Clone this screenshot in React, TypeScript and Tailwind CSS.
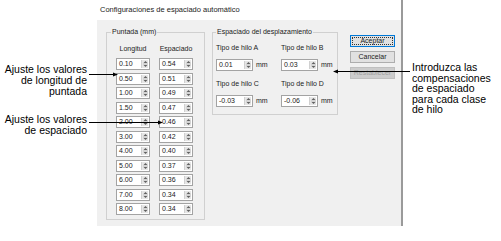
import { Fragment } from 'react';

const rows = [
  ['0.10', '0.54'],
  ['0.50', '0.51'],
  ['1.00', '0.49'],
  ['1.50', '0.47'],
  ['2.00', '0.46'],
  ['3.00', '0.42'],
  ['4.00', '0.40'],
  ['5.00', '0.37'],
  ['6.00', '0.36'],
  ['7.00', '0.34'],
  ['8.00', '0.34'],
];

function Spinner() {
  return (
    <span className="my-[1px] mr-[1px] flex w-[7px] items-center justify-center border-l border-[#d0d0d0] bg-[#e6e6e6]">
      <svg width="5" height="8" viewBox="0 0 5 8">
        <path d="M2.5 1 L4.5 3 H0.5Z" fill="#606060" />
        <path d="M0 4h5" stroke="#b0b0b0" strokeWidth="0.7" />
        <path d="M0.5 5 H4.5 L2.5 7Z" fill="#606060" />
      </svg>
    </span>
  );
}

function SpinBox({ value, w }: { value: string; w: string }) {
  return (
    <div className={`flex h-[12px] ${w} border border-[#a3a3a3] bg-white`}>
      <span className="flex-1 pl-[2px] text-[7px] leading-[10px] text-[#222]">{value}</span>
      <Spinner />
    </div>
  );
}

function HiloField({ label, value }: { label: string; value: string }) {
  return (
    <div className="flex flex-col">
      <span className="h-[10px] text-[7px] leading-[10px]">{label}</span>
      <div className="mt-[6px] flex items-center">
        <SpinBox value={value} w="w-[37px]" />
        <span className="ml-[3px] text-[7px] leading-[10px]">mm</span>
      </div>
    </div>
  );
}

export default function App() {
  return (
    <div className="relative flex h-[241px] w-[501px] bg-white font-['Liberation_Sans',Arial,sans-serif] text-black">
      {/* left notes */}
      <div className="w-[97px] pr-[10px] pt-[64px] text-right text-[10.5px] leading-[11px]">
        <p>Ajuste los valores<br />de longitud de<br />puntada</p>
        <p className="mt-[17px]">Ajuste los valores<br />de espaciado</p>
      </div>

      {/* dialog */}
      <div className="flex h-[226px] w-[306px] flex-col border-r-2 border-[#9a9a9a]">
        <div className="h-[20px] pl-[3px] pt-[5px] text-[7.5px] leading-[10px] text-[#222]">
          Configuraciones de espaciado automático
        </div>
        <div className="flex flex-1 bg-[#f0f0f0] pl-[9px] pt-[7px] text-[#222]">
          <fieldset className="h-[193px] w-[99px] border border-[#d0d0d0] px-[9px]">
            <legend className="ml-[-5px] px-[1px] text-[7px] leading-[10px]">Puntada (mm)</legend>
            <div className="mt-[7px] grid grid-cols-[34px_34px] gap-x-[9px] text-center text-[7px] leading-[10px]">
              <span>Longitud</span>
              <span>Espaciado</span>
            </div>
            <div className="mt-[4px] grid grid-cols-[34px_34px] gap-x-[9px] gap-y-[2.5px]">
              {rows.map(([a, b]) => (
                <Fragment key={a}>
                  <SpinBox value={a} w="w-[34px]" />
                  <SpinBox value={b} w="w-[34px]" />
                </Fragment>
              ))}
            </div>
          </fieldset>

          <fieldset className="ml-[7px] h-[88px] w-[125px] border border-[#d0d0d0] pl-[3px]">
            <legend className="px-[1px] text-[7px] leading-[10px]">Espaciado del desplazamiento</legend>
            <div className="mt-[6px] grid grid-cols-[65px_56px] gap-y-[8px]">
              <HiloField label="Tipo de hilo A" value="0.01" />
              <HiloField label="Tipo de hilo B" value="0.03" />
              <HiloField label="Tipo de hilo C" value="-0.03" />
              <HiloField label="Tipo de hilo D" value="-0.06" />
            </div>
          </fieldset>

          <div className="ml-[12px] mt-[8px] flex w-[45px] flex-col gap-[4px] text-[7px] leading-[10px]">
            <button className="h-[12px] border border-[#0078d7] bg-[#e1e1e1] p-[1px]">
              <span className="flex h-full items-center justify-center border border-dotted border-[#333]">Aceptar</span>
            </button>
            <button className="h-[12px] border border-[#adadad] bg-[#e1e1e1]">Cancelar</button>
            <button className="h-[12px] border border-[#bfbfbf] bg-[#cccccc] text-[#a0a0a0]">Restablecer</button>
          </div>
        </div>
      </div>

      {/* right note */}
      <div className="flex-1 pl-[9px] pt-[62px] text-[10.5px] leading-[10.5px]">
        <p>Introduzca las<br />compensaciones<br />de espaciado<br />para cada clase<br />de hilo</p>
      </div>

      {/* callout arrows */}
      <svg className="pointer-events-none absolute inset-0" width="501" height="241" viewBox="0 0 501 241">
        <path d="M89 74.5 H114" stroke="#000" strokeWidth="1" />
        <path d="M118 74.5 L113 72.5 L113 76.5Z" fill="#000" />
        <path d="M89 122.5 H159" stroke="#000" strokeWidth="1" />
        <path d="M163 122.5 L158 120.5 L158 124.5Z" fill="#000" />
        <path d="M337 71.5 H410" stroke="#000" strokeWidth="1" />
        <path d="M333 71.5 L338 69.5 L338 73.5Z" fill="#000" />
      </svg>
    </div>
  );
}
